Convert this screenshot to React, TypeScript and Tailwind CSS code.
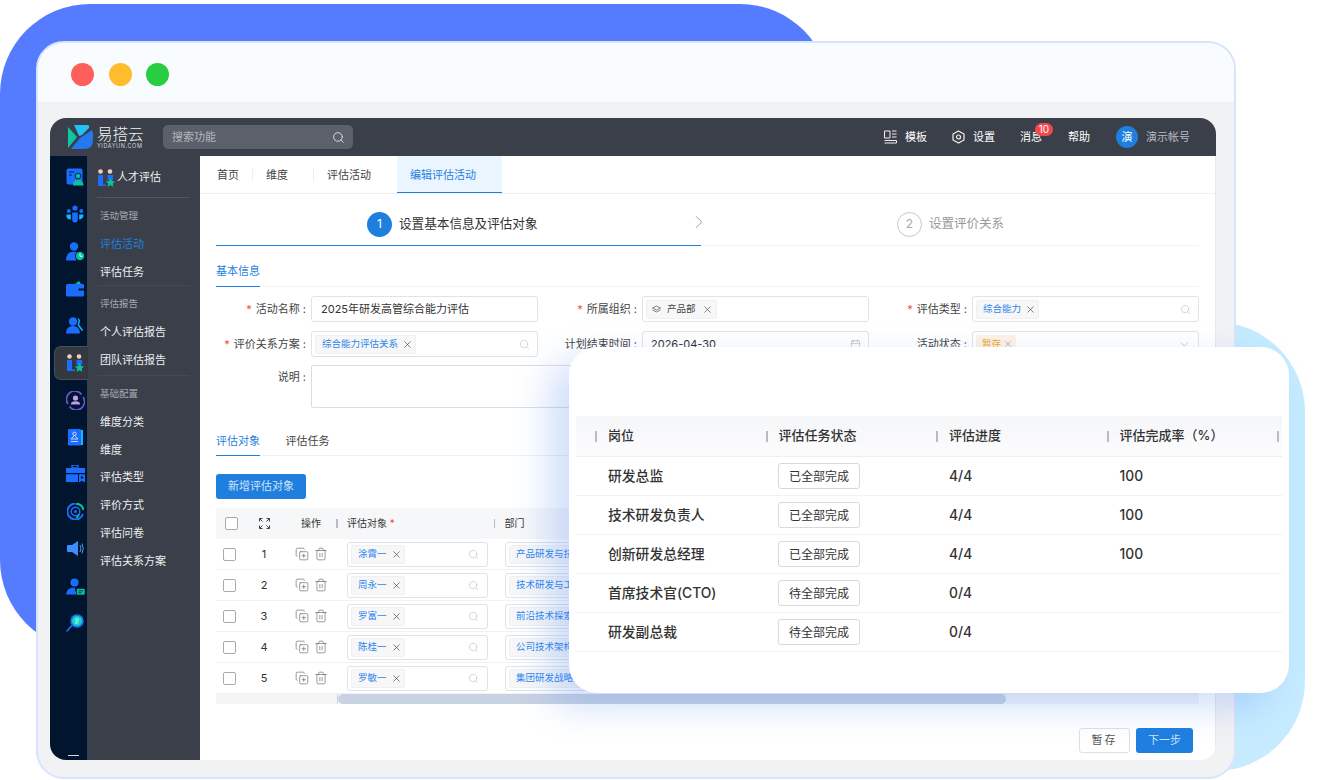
import { Calendar, ChevronDown, ChevronRight, CopyPlus, Search, Trash2, X } from "lucide-react";
import type { ReactNode } from "react";

const blue = "#1a6dff";
const teal = "#06c49a";

const Logo = () => (
  <svg width="25" height="25" viewBox="0 0 25 25" className="shrink-0">
    <path d="M0 2 L9 12 L0 23 Z" fill="#0bc8a0" />
    <path d="M6 0 H19 Q22 0 21 3 L14 10 L11 11 Z" fill="#22c0f5" />
    <path d="M24 5 Q25 7 25 10 V15 Q25 24 16 24 H3 L12 13 Z" fill="#2478f0" />
  </svg>
);

const TeamIcon = ({ size = 18 }: { size?: number }) => (
  <svg width={size} height={size} viewBox="0 0 18 18">
    <circle cx="3.5" cy="2.5" r="2.3" fill="#f6cdb4" />
    <circle cx="13" cy="2.5" r="2.3" fill="#f6cdb4" />
    <path d="M1 6 H6 V17 H1 Z" fill={blue} />
    <path d="M6 15.5 H9 V17 H6 Z" fill={blue} />
    <path d="M10.5 6 H16 V11 H10.5 Z" fill={blue} />
    <path d="M13.5 9 L15 12 L18 12.4 L15.8 14.5 L16.4 17.8 L13.5 16.2 L10.6 17.8 L11.2 14.5 L9 12.4 L12 12 Z" fill={teal} />
  </svg>
);

const railIcons: ReactNode[] = [
  <svg key="a" width="18" height="18" viewBox="0 0 18 18">
    <rect x="0.5" y="0.5" width="16" height="16" rx="2" fill={blue} />
    <path d="M3 4 H8 M3 7 H6" stroke="#06223f" strokeWidth="1.2" />
    <circle cx="12" cy="8" r="2.8" fill={teal} stroke="#06223f" />
    <path d="M7 17.5 Q7 12 12 12 Q17.5 12 17.5 17.5 Z" fill={teal} />
  </svg>,
  <svg key="b" width="18" height="18" viewBox="0 0 18 18">
    <circle cx="9" cy="3" r="2.6" fill={blue} />
    <circle cx="2.8" cy="6" r="2" fill={blue} />
    <circle cx="15.2" cy="6" r="2" fill={blue} />
    <path d="M6.2 7.5 H11.8 V14 Q11.8 17.5 9 17.5 Q6.2 17.5 6.2 14 Z" fill={blue} />
    <path d="M0.5 9.5 H4.8 V14.5 Q2 15 0.5 12 Z M13.2 9.5 H17.5 Q17.5 14 13.2 14.5 Z" fill="#14b8ff" />
  </svg>,
  <svg key="c" width="19" height="19" viewBox="0 0 19 19">
    <circle cx="8" cy="4.5" r="4.2" fill={blue} />
    <path d="M0 18.5 Q0 9.8 8 9.8 Q11 9.8 12 11 L10 18.5 Z" fill={blue} />
    <circle cx="14" cy="14" r="4.6" fill={teal} stroke="#02152e" />
    <path d="M14 11.5 V14.3 H16.3" stroke="#fff" strokeWidth="1" fill="none" />
  </svg>,
  <svg key="d" width="18" height="16" viewBox="0 0 18 16">
    <path d="M9 3 L13 0 L15 3 Z" fill={teal} />
    <path d="M1.5 3 H17 Q18 3 18 4 V14 Q18 15.5 16.5 15.5 H1.5 Q0 15.5 0 14 V4.5 Q0 3 1.5 3 Z" fill={blue} />
    <rect x="12.5" y="7.5" width="5.5" height="2" fill="#02152e" />
  </svg>,
  <svg key="e" width="18" height="17" viewBox="0 0 18 17">
    <circle cx="7" cy="4.5" r="4.2" fill={blue} />
    <path d="M0 16.5 Q0 9 7 9 Q14 9 14 16.5 Z" fill={blue} />
    <path d="M11.5 0.8 Q15.5 2.5 13 7.5 L17.5 13.5 H15.5 L11.5 8 Q13.5 4 11.5 0.8 Z" fill="#14b8ff" />
  </svg>,
  <TeamIcon key="f" />,
  <svg key="g" width="19" height="19" viewBox="0 0 19 19">
    <path d="M2 13 A8 8 0 0 1 15.5 3.5 M17 6 A8 8 0 0 1 3.5 15.5" stroke="#6a58d8" strokeWidth="1.6" fill="none" />
    <circle cx="9.5" cy="7" r="2.6" fill="#c59af0" />
    <path d="M4.8 13.5 Q5 10.3 9.5 10.3 Q14 10.3 14.2 13.5 Z" fill="#c59af0" />
  </svg>,
  <svg key="h" width="15" height="17" viewBox="0 0 15 17">
    <rect width="13" height="16.5" rx="1" fill={blue} />
    <rect x="13" y="1" width="2" height="15" fill="#14b8ff" />
    <circle cx="6.5" cy="4.8" r="1.7" fill="none" stroke="#cfe0ff" />
    <path d="M3 10 L6.5 6.5 L10 10 Z M3 12.5 H10" stroke="#cfe0ff" strokeWidth="0.9" fill="none" />
  </svg>,
  <svg key="i" width="19" height="18" viewBox="0 0 19 18">
    <rect x="6" y="0" width="6" height="3" rx="1" fill="none" stroke={blue} strokeWidth="1.4" />
    <path d="M0 3 H19 V8 H0 Z M0 9.2 H12 V17 H0 Z" fill={blue} />
    <path d="M13 9.2 H19 V17.5 L16 15.8 L13 17.5 Z" fill={blue} />
    <circle cx="16" cy="12.5" r="1.2" fill="#02152e" />
  </svg>,
  <svg key="j" width="17" height="17" viewBox="0 0 17 17">
    <path d="M8.5 0.5 A8 8 0 1 0 16 11" fill="none" stroke={blue} strokeWidth="2" />
    <path d="M9 0.7 A8 8 0 0 1 16.5 7" fill="none" stroke={teal} strokeWidth="2" />
    <circle cx="8.5" cy="8.5" r="4.3" fill="none" stroke={blue} strokeWidth="1.4" />
    <circle cx="8.5" cy="8.5" r="1.5" fill={blue} />
    <path d="M12 11 A5 5 0 0 1 9 15" fill="none" stroke={teal} strokeWidth="1.6" />
  </svg>,
  <svg key="k" width="17" height="15" viewBox="0 0 17 15">
    <path d="M1 4 H5 L11 0 V15 L5 11 H1 Q0 11 0 10 V5 Q0 4 1 4 Z" fill="#3f8cff" />
    <path d="M13 4 Q15 7.5 13 11 M15 2.5 Q17.5 7.5 15 12.5" stroke="#6aa6ff" strokeWidth="0.9" fill="none" />
  </svg>,
  <svg key="l" width="19" height="17" viewBox="0 0 19 17">
    <circle cx="8.5" cy="4.5" r="4" fill={blue} />
    <path d="M0 16.5 Q0.5 9.5 8.5 9.5 L10.5 16.5 Z" fill={blue} />
    <rect x="10.5" y="10.5" width="8.5" height="6.5" rx="1.2" fill={teal} stroke="#02152e" strokeWidth="0.6" />
    <path d="M12.5 12.8 H17 M12.5 14.8 H15.5" stroke="#02152e" strokeWidth="0.8" />
  </svg>,
  <svg key="m" width="18" height="18" viewBox="0 0 18 18">
    <circle cx="11" cy="7" r="6.8" fill={blue} />
    <circle cx="11" cy="7" r="5" fill="#18d2c2" />
    <path d="M9 5 H13 M9 7 H13 M9 9 H12" stroke="#cffff4" strokeWidth="0.8" />
    <path d="M5.5 12 L1 17" stroke={blue} strokeWidth="1.6" strokeLinecap="round" />
  </svg>,
];

const menu = [
  { label: "活动管理", items: ["评估活动", "评估任务"], end: "border-b border-[#444954]" },
  { label: "评估报告", items: ["个人评估报告", "团队评估报告"], end: "border-b border-[#444954] pb-[1.5px]" },
  { label: "基础配置", items: ["维度分类", "维度", "评估类型", "评价方式", "评估问卷", "评估关系方案"], end: "" },
];

const Tag = ({ children, tone = "blue" }: { children: ReactNode; tone?: "blue" | "orange" }) => (
  <span
    className={
      tone === "blue"
        ? "inline-flex h-[19px] shrink-0 items-center gap-[4px] whitespace-nowrap rounded-[2px] border border-[#f0f0f0] bg-[#f7f7f7] pl-[6px] pr-[2px] text-[9.5px] text-[#2d86ee]"
        : "inline-flex h-[19px] shrink-0 items-center gap-[2px] whitespace-nowrap rounded-[2px] bg-[#fdf3e6] pl-[6px] pr-[3px] text-[9.5px] text-[#f5a623]"
    }
  >
    {children}
    <X size={tone === "blue" ? 11 : 10} strokeWidth={1.3} className={tone === "blue" ? "text-[#333]" : "text-[#888]"} />
  </span>
);

const Box = ({ children, right }: { children?: ReactNode; right?: ReactNode }) => (
  <div className="flex h-[26px] w-[227px] items-center justify-between rounded-[3px] border border-[#e2e3e6] bg-white pl-[3px] pr-[7px] text-[11px] text-[#333]">
    <div className="flex items-center">{children}</div>
    {right}
  </div>
);

const Field = ({ label, required, children }: { label: string; required?: boolean; children: ReactNode }) => (
  <div className="flex items-center">
    <div className="w-[95px] shrink-0 whitespace-nowrap pr-[5px] text-right text-[11px] text-[#444]">
      {required && <span className="mr-[4px] text-[#f5484d]">*</span>}
      {label}
      <span className="ml-[3px]">:</span>
    </div>
    {children}
  </div>
);

const searchIcon = <Search size={11} strokeWidth={1.2} className="text-[#b9b9b9]" />;

const rows = [
  { no: 1, name: "涂霄一", dept: "产品研发与技术部" },
  { no: 2, name: "周永一", dept: "技术研发与工程部" },
  { no: 3, name: "罗富一", dept: "前沿技术探索部" },
  { no: 4, name: "陈桂一", dept: "公司技术架构部" },
  { no: 5, name: "罗敏一", dept: "集团研发战略部" },
];

const cardRows = [
  { post: "研发总监", status: "已全部完成", progress: "4/4", rate: "100" },
  { post: "技术研发负责人", status: "已全部完成", progress: "4/4", rate: "100" },
  { post: "创新研发总经理", status: "已全部完成", progress: "4/4", rate: "100" },
  { post: "首席技术官(CTO)", status: "待全部完成", progress: "0/4", rate: "" },
  { post: "研发副总裁", status: "待全部完成", progress: "0/4", rate: "" },
];

const Check = () => <span className="block h-[13px] w-[13px] rounded-[2px] border-[1.5px] border-[#a9a9a9] bg-white" />;

const Sep = () => <span className="h-[9px] w-[1.5px] shrink-0 bg-[#b8bcc4]" />;

export default function App() {
  return (
    <div
      className="relative h-[780px] w-[1320px] overflow-hidden bg-white"
      style={{ fontFamily: 'Inter, "Noto Sans CJK SC", sans-serif' }}
    >
      <div className="absolute left-0 top-[4px] h-[646px] w-[830px] rounded-[90px] bg-[#557cff]" />
      <div className="absolute left-[1050px] top-[322px] h-[449px] w-[255px] rounded-[90px] bg-[#c6ebff]" />

      <div className="relative ml-[36px] mt-[41px] h-[738px] w-[1200px] overflow-hidden rounded-[28px] border-2 border-[#d6e5fb] bg-[#f1f2f4]">
        <div className="flex h-[59px] items-center gap-[14.5px] bg-[#f9fcff] pl-[33px] pt-[4px]">
          <span className="h-[23px] w-[23px] rounded-full bg-[#ff5f5b]" />
          <span className="h-[23px] w-[23px] rounded-full bg-[#ffbd2e]" />
          <span className="h-[23px] w-[23px] rounded-full bg-[#28cd41]" />
        </div>

        <div className="mx-[12px] mt-[16px] flex h-[642px] w-[1166px] flex-col overflow-hidden rounded-[16px]">
          {/* top bar */}
          <header className="flex h-[38px] shrink-0 items-center bg-[#3a3f49] text-[11px] text-white">
            <div className="ml-[18px] flex items-center gap-[4px]">
              <Logo />
              <div className="flex w-[47px] flex-col leading-none">
                <span className="text-[15.5px] font-light leading-[17px] text-[#f1f2f4]">易搭云</span>
                <span className="whitespace-nowrap text-[5.5px] leading-[6px] tracking-[0.6px] text-[#d5d7da]">YIDAYUN.COM</span>
              </div>
            </div>
            <div className="ml-[19px] flex h-[24px] w-[190px] items-center justify-between rounded-[5px] bg-[#5b606a] pl-[9px] pr-[8px] text-[#b4b7bc]">
              <span>搜索功能</span>
              <Search size={13} strokeWidth={1.6} className="text-[#e8e8e8]" />
            </div>
            <div className="ml-auto flex items-center pr-[26px]">
              <svg width="13" height="14" viewBox="0 0 13 14" fill="none" stroke="#f0f0f0" strokeWidth="1">
                <path d="M0.5 1 H6 V8 H0.5 Z M8 1 H12.5 M8 4 H12.5 M8 7 H12.5 M0.5 10.5 H12.5 V13 H0.5" />
              </svg>
              <span className="ml-[8px]">模板</span>
              <svg className="ml-[25px]" width="13" height="14" viewBox="0 0 13 14" fill="none" stroke="#f0f0f0" strokeWidth="1.2">
                <path d="M6.5 1 L12 4 V10 L6.5 13 L1 10 V4 Z" />
                <circle cx="6.5" cy="7" r="2" />
              </svg>
              <span className="ml-[8px]">设置</span>
              <span className="relative ml-[25px]">
                消息
                <span className="absolute -top-[6px] left-[15px] flex h-[13px] w-[18px] items-center justify-center rounded-full bg-[#f5484d] text-[10px] leading-none text-white">
                  10
                </span>
              </span>
              <span className="ml-[26px]">帮助</span>
              <span className="ml-[26px] flex h-[22px] w-[22px] items-center justify-center rounded-full bg-[#1f7fdf] text-[11px]">演</span>
              <span className="ml-[8px] text-[#b9bcc1]">演示帐号</span>
            </div>
          </header>

          <div className="flex min-h-0 flex-1">
            {/* icon rail */}
            <nav className="relative flex w-[37px] shrink-0 flex-col items-center bg-[#02152e] pl-[13px] pt-[2.4px]">
              {railIcons.map((icon, i) => (
                <div key={i} className="relative flex h-[37.2px] w-full items-center justify-center">
                  {i === 5 && (
                    <span className="absolute -left-[9px] top-[1.6px] h-[34px] w-[34px] rounded-l-[7px] border border-r-0 border-[#4a4e57] bg-[#33373f]" />
                  )}
                  <span className="relative flex">{icon}</span>
                </div>
              ))}
              <span className="absolute bottom-0 left-[18px] h-[5px] w-[11px] border-t border-[#d5d7da]" />
            </nav>

            {/* menu */}
            <aside className="w-[113px] shrink-0 border-l border-[#2f4156] bg-[#3a3f49] pl-[9px] pr-[10px] text-[11px] text-[#eef0f2]">
              <div className="flex h-[42px] items-center gap-[2px] border-b border-[#50555f] pt-[2px]">
                <TeamIcon />
                <span className="text-[#f0f1f2]">人才评估</span>
              </div>
              {menu.map((group) => (
                <div key={group.label} className={group.end}>
                  <div className="flex h-[31.5px] items-center pl-[3px] pt-[5px] text-[9.5px] text-[#a8abb1]">{group.label}</div>
                  {group.items.map((item) => (
                    <div key={item} className={item === "评估活动" ? "flex h-[27.8px] items-center pl-[3px] pt-[2px] text-[#1f7fdf]" : "flex h-[27.8px] items-center pl-[3px] pt-[2px]"}>
                      {item}
                    </div>
                  ))}
                </div>
              ))}
            </aside>

            {/* content */}
            <main className="flex min-w-0 flex-1 flex-col border-r border-[#e6e7ea] bg-white text-[#333]">
              <div className="flex h-[37.5px] shrink-0 items-stretch border-b border-[#f0f0f0] text-[11px] text-[#444]">
                <span className="ml-[17px] flex items-center pt-[2px]">首页</span>
                <span className="ml-[13px] mt-[13px] h-[12px] w-px bg-[#eeeeee]" />
                <span className="ml-[13px] flex items-center pt-[2px]">维度</span>
                <span className="ml-[25px] mt-[13px] h-[12px] w-px bg-[#eeeeee]" />
                <span className="ml-[13px] flex items-center pt-[2px]">评估活动</span>
                <span className="ml-[26px] flex w-[105px] items-center border-b-[1.5px] border-[#1f7fdf] bg-[#eaf5ff] pl-[13px] pt-[2px] text-[#1f7fdf]">
                  编辑评估活动
                </span>
              </div>

              <div className="mx-[16px] flex h-[52px] shrink-0 border-b border-[#f3f3f3] pt-[10px]">
                <div className="relative -mb-[1px] flex w-[485px] items-center border-b-[1.5px] border-[#1f7fdf] pl-[151px]">
                  <span className="flex h-[25px] w-[25px] items-center justify-center rounded-full bg-[#1f7fdf] text-[12px] text-white">1</span>
                  <span className="ml-[7px] text-[12.6px] text-[#333]">设置基本信息及评估对象</span>
                  <ChevronRight size={22} strokeWidth={0.8} className="absolute right-[-9px] top-[7px] text-[#777]" />
                </div>
                <div className="flex items-center pl-[196px]">
                  <span className="flex h-[25px] w-[25px] items-center justify-center rounded-full border border-[#c8c8c8] text-[12px] text-[#aaa]">2</span>
                  <span className="ml-[7px] text-[12.5px] text-[#999]">设置评价关系</span>
                </div>
              </div>

              <div className="mx-[16px] mt-[16px] h-[25px] shrink-0 border-b border-[#f3f3f3]">
                <span className="-mb-[1px] block h-[25px] w-[44px] border-b-[1.5px] border-[#1f7fdf] pt-[1px] text-[11px] text-[#1f7fdf]">基本信息</span>
              </div>

              <div className="ml-[16px] mt-[9.5px] grid shrink-0 grid-cols-[331px_330px_322px] gap-y-[9px]">
                <Field label="活动名称" required>
                  <Box>
                    <span className="pl-[6px]">2025年研发高管综合能力评估</span>
                  </Box>
                </Field>
                <Field label="所属组织" required>
                  <Box>
                    <span className="inline-flex h-[19px] items-center gap-[6px] rounded-[2px] border border-[#f0f0f0] bg-[#f7f7f7] pl-[5px] pr-[3px] text-[9.5px] text-[#444]">
                      <svg width="9" height="9" viewBox="0 0 9 9" fill="none" stroke="#666" strokeWidth="0.8">
                        <path d="M4.5 1 L8.5 3 L4.5 5 L0.5 3 Z M0.5 5 L4.5 7 L8.5 5" />
                      </svg>
                      产品部
                      <X size={11} strokeWidth={1.3} className="text-[#333]" />
                    </span>
                  </Box>
                </Field>
                <Field label="评估类型" required>
                  <Box right={searchIcon}>
                    <Tag>综合能力</Tag>
                  </Box>
                </Field>
                <Field label="评价关系方案" required>
                  <Box right={searchIcon}>
                    <Tag>综合能力评估关系</Tag>
                  </Box>
                </Field>
                <Field label="计划结束时间">
                  <Box right={<Calendar size={11} strokeWidth={1} className="text-[#999]" />}>
                    <span className="pl-[5px]">2026-04-30</span>
                  </Box>
                </Field>
                <Field label="活动状态">
                  <Box right={<ChevronDown size={13} strokeWidth={1} className="text-[#999]" />}>
                    <Tag tone="orange">暂存</Tag>
                  </Box>
                </Field>
                <div className="col-span-3 -mt-[1px] flex">
                  <div className="w-[95px] shrink-0 whitespace-nowrap pr-[5px] pt-[4px] text-right text-[11px] text-[#444]">
                    说明
                    <span className="ml-[3px]">:</span>
                  </div>
                  <div className="h-[43px] w-[888px] rounded-[2px] border border-[#dcdde0]" />
                </div>
              </div>

              <div className="mx-[16px] mt-[22px] flex h-[26px] shrink-0 gap-[25.5px] border-b border-[#f0f0f0] pt-[3px] text-[11px]">
                <span className="-mb-[1px] h-[23px] border-b-[1.5px] border-[#1f7fdf] text-[#1f7fdf]">评估对象</span>
                <span className="text-[#444]">评估任务</span>
              </div>

              <div className="ml-[16px] mt-[18px] flex h-[25px] w-[90px] shrink-0 items-center justify-center rounded-[3px] bg-[#1f7fdf] text-[11px] text-[#cfe3f8]">
                新增评估对象
              </div>

              {/* table */}
              <div className="mx-[16px] mt-[9px] shrink-0 text-[10px] text-[#333]">
                <div className="flex h-[31px] items-center bg-[#f6f7f9]">
                  <span className="ml-[9px]"><Check /></span>
                  <svg className="ml-[21px]" width="11" height="11" viewBox="0 0 11 11" fill="none" stroke="#444" strokeWidth="1">
                    <path d="M0.5 3.5 V0.5 H3.5 M7.5 0.5 H10.5 V3.5 M0.5 7.5 V10.5 H3.5 M7.5 10.5 H10.5 V7.5 M0.5 0.5 L3.5 3.5 M10.5 0.5 L7.5 3.5 M0.5 10.5 L3.5 7.5 M10.5 10.5 L7.5 7.5" />
                  </svg>
                  <span className="ml-[31px] w-[35px]">操作</span>
                  <Sep />
                  <span className="ml-[9.5px] w-[146.5px]">评估对象 <span className="text-[#f5484d]">*</span></span>
                  <Sep />
                  <span className="ml-[9.5px]">部门</span>
                </div>
                {rows.map((row) => (
                  <div key={row.no} className="flex h-[31px] items-center border-b border-[#f2f2f2] last:border-b-0">
                    <span className="ml-[7px]"><Check /></span>
                    <span className="ml-[16px] w-[24px] text-center text-[11px]">{row.no}</span>
                    <span className="ml-[19px] flex gap-[5px] text-[#555]">
                      <CopyPlus size={14} strokeWidth={1} />
                      <Trash2 size={14} strokeWidth={1} />
                    </span>
                    <span className="ml-[19px] flex h-[25px] w-[141px] items-center justify-between rounded-[3px] border border-[#e2e3e6] pl-[3px] pr-[8px]">
                      <Tag>{row.name}</Tag>
                      {searchIcon}
                    </span>
                    <span className="ml-[17px] flex h-[25px] w-[141px] items-center overflow-hidden rounded-[3px] border border-[#e2e3e6] pl-[3px]">
                      <Tag>{row.dept}</Tag>
                    </span>
                  </div>
                ))}
                <div className="flex h-[10px] items-stretch bg-[#f4f5f7]">
                  <span className="w-[122px] border-r border-[#cfd3da]" />
                  <span className="w-[668px] rounded-full bg-[#c8d2e2]" />
                </div>
              </div>

              <div className="mt-auto flex justify-end gap-[6px] pb-[7px] pr-[22px] text-[11px]">
                <span className="flex h-[25px] w-[51px] items-center justify-center rounded-[3px] border border-[#dedfe2] bg-white tracking-[2px] text-[#555]">暂存</span>
                <span className="flex h-[25px] w-[57px] items-center justify-center rounded-[3px] bg-[#1f7fdf] text-[#cfe3f8]">下一步</span>
              </div>
            </main>
          </div>
        </div>
      </div>

      {/* floating card */}
      <div className="absolute left-[569px] top-[347px] h-[346px] w-[720px] rounded-[28px] bg-white px-[7px] pt-[69px] shadow-[-20px_14px_36px_rgba(60,120,240,0.24)]">
        <div className="grid h-[41px] grid-cols-[170.5px_170.5px_170.5px_170.5px_1fr] items-center border-b border-[#eeeff1] bg-gradient-to-b from-[#f5f6f8] to-[#fcfcfd] pl-[19px] text-[13px] font-medium text-[#333]">
          {["岗位", "评估任务状态", "评估进度", "评估完成率（%）", ""].map((title) => (
            <div key={title} className="flex items-center gap-[11px]">
              <span className="h-[11px] w-[2px] shrink-0 bg-[#b8bcc4]" />
              <span>{title}</span>
            </div>
          ))}
        </div>
        {cardRows.map((row) => (
          <div
            key={row.post}
            className="grid h-[39px] grid-cols-[170.5px_170.5px_170.5px_170.5px_1fr] items-center border-b border-[#f2f2f2] pl-[32px] text-[13.8px] font-medium text-[#333]"
          >
            <span className="-mr-[13px]">{row.post}</span>
            <span>
              <span className="-ml-[0.5px] flex h-[26px] w-[82px] items-center justify-center rounded-[3px] border border-[#d9d9d9] pt-[1px] text-[12px] font-normal">
                {row.status}
              </span>
            </span>
            <span>{row.progress}</span>
            <span>{row.rate}</span>
            <span />
          </div>
        ))}
      </div>
    </div>
  );
}
